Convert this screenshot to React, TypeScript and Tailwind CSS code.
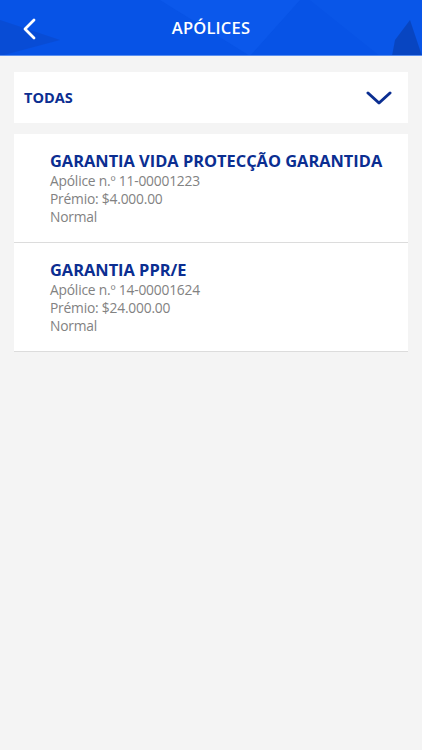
import React from 'react';

interface Policy {
    name: string;
    number: string;
    premium: string;
    status: string;
}

const policies: Policy[] = [
    { name: 'GARANTIA VIDA PROTECÇÃO GARANTIDA', number: '11-00001223', premium: '$4.000.00', status: 'Normal' },
    { name: 'GARANTIA PPR/E', number: '14-00001624', premium: '$24.000.00', status: 'Normal' },
];

const PolicyRow: React.FC<{ policy: Policy; last?: boolean }> = ({ policy, last }) => (
    <div className={`pl-9 pr-3 pt-[16px] pb-[16px] ${last ? '' : 'border-b border-[#dcdcdc]'}`}>
        <div className="text-[16.4px] leading-[22px] font-bold text-[#0b2e91] whitespace-nowrap">{policy.name}</div>
        <div className="text-[13.8px] leading-[18px] tracking-[-0.2px] text-[#828282]">Apólice n.º {policy.number}</div>
        <div className="text-[13.8px] leading-[18px] tracking-[-0.2px] text-[#828282]">Prémio: {policy.premium}</div>
        <div className="text-[13.8px] leading-[18px] tracking-[-0.2px] text-[#828282]">{policy.status}</div>
    </div>
);

export default function App() {
    return (
        <div className="w-[422px] h-[750px] bg-[#f4f4f4] font-['Open_Sans',sans-serif] flex flex-col">
            {/* Header */}
            <div className="relative h-[56px] bg-[#0753e6] overflow-hidden flex items-center justify-center border-b border-[#5a8ff0]">
                <svg className="absolute inset-0" width="422" height="56" viewBox="0 0 422 56">
                    <polygon points="0,20 60,40 0,56" fill="#0a48c9" opacity="0.6" />
                    <polygon points="160,0 300,0 250,56" fill="#0f5df0" opacity="0.5" />
                    <polygon points="310,0 422,0 422,56 380,56" fill="#0c58ea" opacity="0.6" />
                    <polygon points="395,40 410,20 422,56 392,56" fill="#093fb0" opacity="0.7" />
                </svg>
                <button className="absolute left-[22px] top-[17px] text-white">
                    <svg width="16" height="24" viewBox="0 0 16 24" fill="none" stroke="white" strokeWidth="2.8" strokeLinecap="round" strokeLinejoin="round">
                        <path d="M12 3 L3 12 L12 21" />
                    </svg>
                </button>
                <span className="relative top-[1px] text-white text-[16.5px] font-semibold tracking-[0.2px]">APÓLICES</span>
            </div>

            {/* Filter */}
            <div className="mx-[14px] mt-[16px] h-[51px] bg-white flex items-center justify-between pl-[10px] pr-[16px]">
                <span className="text-[14.5px] font-bold text-[#0b2e91]">TODAS</span>
                <svg width="26" height="16" viewBox="0 0 26 16" fill="none" stroke="#0b2e91" strokeWidth="3" strokeLinecap="round" strokeLinejoin="round">
                    <path d="M2 3 L13 13 L24 3" />
                </svg>
            </div>

            {/* Policies */}
            <div className="mx-[14px] mt-[11px] bg-white border-b border-[#dcdcdc]">
                {policies.map((p, i) => (
                    <PolicyRow key={p.number} policy={p} last={i === policies.length - 1} />
                ))}
            </div>
        </div>
    );
}
